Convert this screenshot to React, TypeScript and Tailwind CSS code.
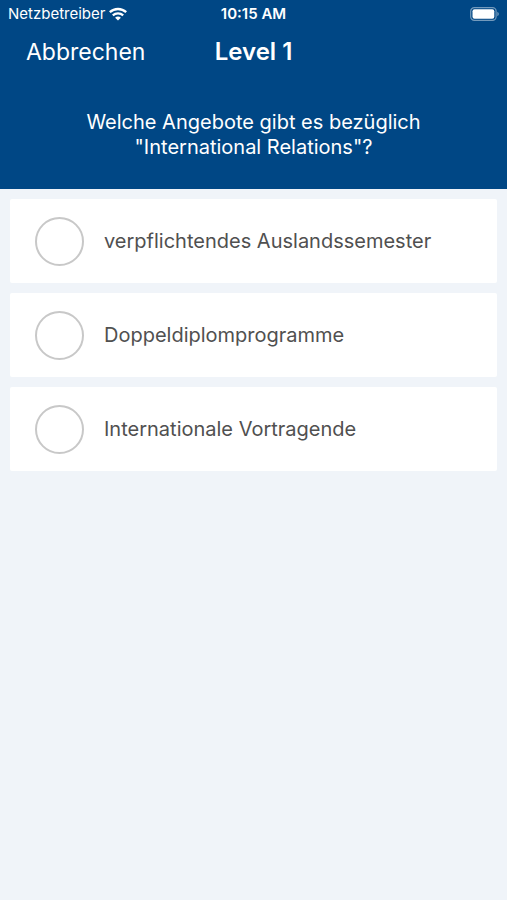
import { useState } from "react";

const answers = [
  "verpflichtendes Auslandssemester",
  "Doppeldiplomprogramme",
  "Internationale Vortragende",
];

function WifiIcon() {
  return (
    <svg viewBox="0 0 18 14" className="h-[14px] w-[18px]" fill="none" stroke="currentColor" aria-hidden="true">
      <path d="M.8 5.2c4.6-4.3 11.8-4.3 16.4 0" strokeWidth="2.3" />
      <path d="M3.8 8.3c3-2.7 7.4-2.7 10.4 0" strokeWidth="2.3" />
      <path d="M9 13.6 6.1 10.7c1.7-1.5 4.1-1.5 5.8 0z" fill="currentColor" stroke="none" />
    </svg>
  );
}

function BatteryIcon() {
  return (
    <svg viewBox="0 0 29 14" className="h-[14px] w-[29px]" fill="none" aria-hidden="true">
      <rect x="0.7" y="0.7" width="25.4" height="12.6" rx="3.6" stroke="currentColor" strokeOpacity="0.45" strokeWidth="1.2" />
      <rect x="2.5" y="2.3" width="21.8" height="9.4" rx="2" fill="currentColor" />
      <path d="M27.3 4.8c2 .8 2 3.6 0 4.4z" fill="currentColor" fillOpacity="0.45" />
    </svg>
  );
}

function StatusBar() {
  return (
    <div className="grid h-7 grid-cols-[1fr_auto_1fr] items-center px-2 text-[15px]">
      <div className="flex items-center gap-1">
        <span>Netzbetreiber</span>
        <WifiIcon />
      </div>
      <span className="font-semibold">10:15 AM</span>
      <div className="flex justify-end">
        <BatteryIcon />
      </div>
    </div>
  );
}

export default function App() {
  const [selected, setSelected] = useState<string | null>(null);

  return (
    <div className="min-h-screen bg-[#f0f4f9] font-['Inter',sans-serif]">
      <header className="bg-[#004785] text-white">
        <StatusBar />
        <nav className="grid h-12 grid-cols-[1fr_auto_1fr] items-center px-[26px]">
          <button type="button" className="justify-self-start text-[23px]">
            Abbrechen
          </button>
          <h1 className="text-2xl font-semibold">Level 1</h1>
        </nav>
        <p id="question" className="mx-auto max-w-[400px] px-4 pt-[34px] pb-[29px] text-center text-xl leading-[25px]">
          Welche Angebote gibt es bezüglich "International Relations"?
        </p>
      </header>

      <main role="radiogroup" aria-labelledby="question" className="flex flex-col gap-[10px] p-[10px]">
        {answers.map((answer) => (
          <label key={answer} className="flex h-[84px] items-center gap-5 rounded-xs bg-white px-[25px] text-xl text-[#505050]">
            <input
              type="radio"
              name="answer"
              value={answer}
              checked={selected === answer}
              onChange={() => setSelected(answer)}
              className="h-[49px] w-[49px] shrink-0 appearance-none rounded-full border-2 border-[#c8c8c8] checked:border-[#004785] checked:bg-[#004785]"
            />
            {answer}
          </label>
        ))}
      </main>
    </div>
  );
}
